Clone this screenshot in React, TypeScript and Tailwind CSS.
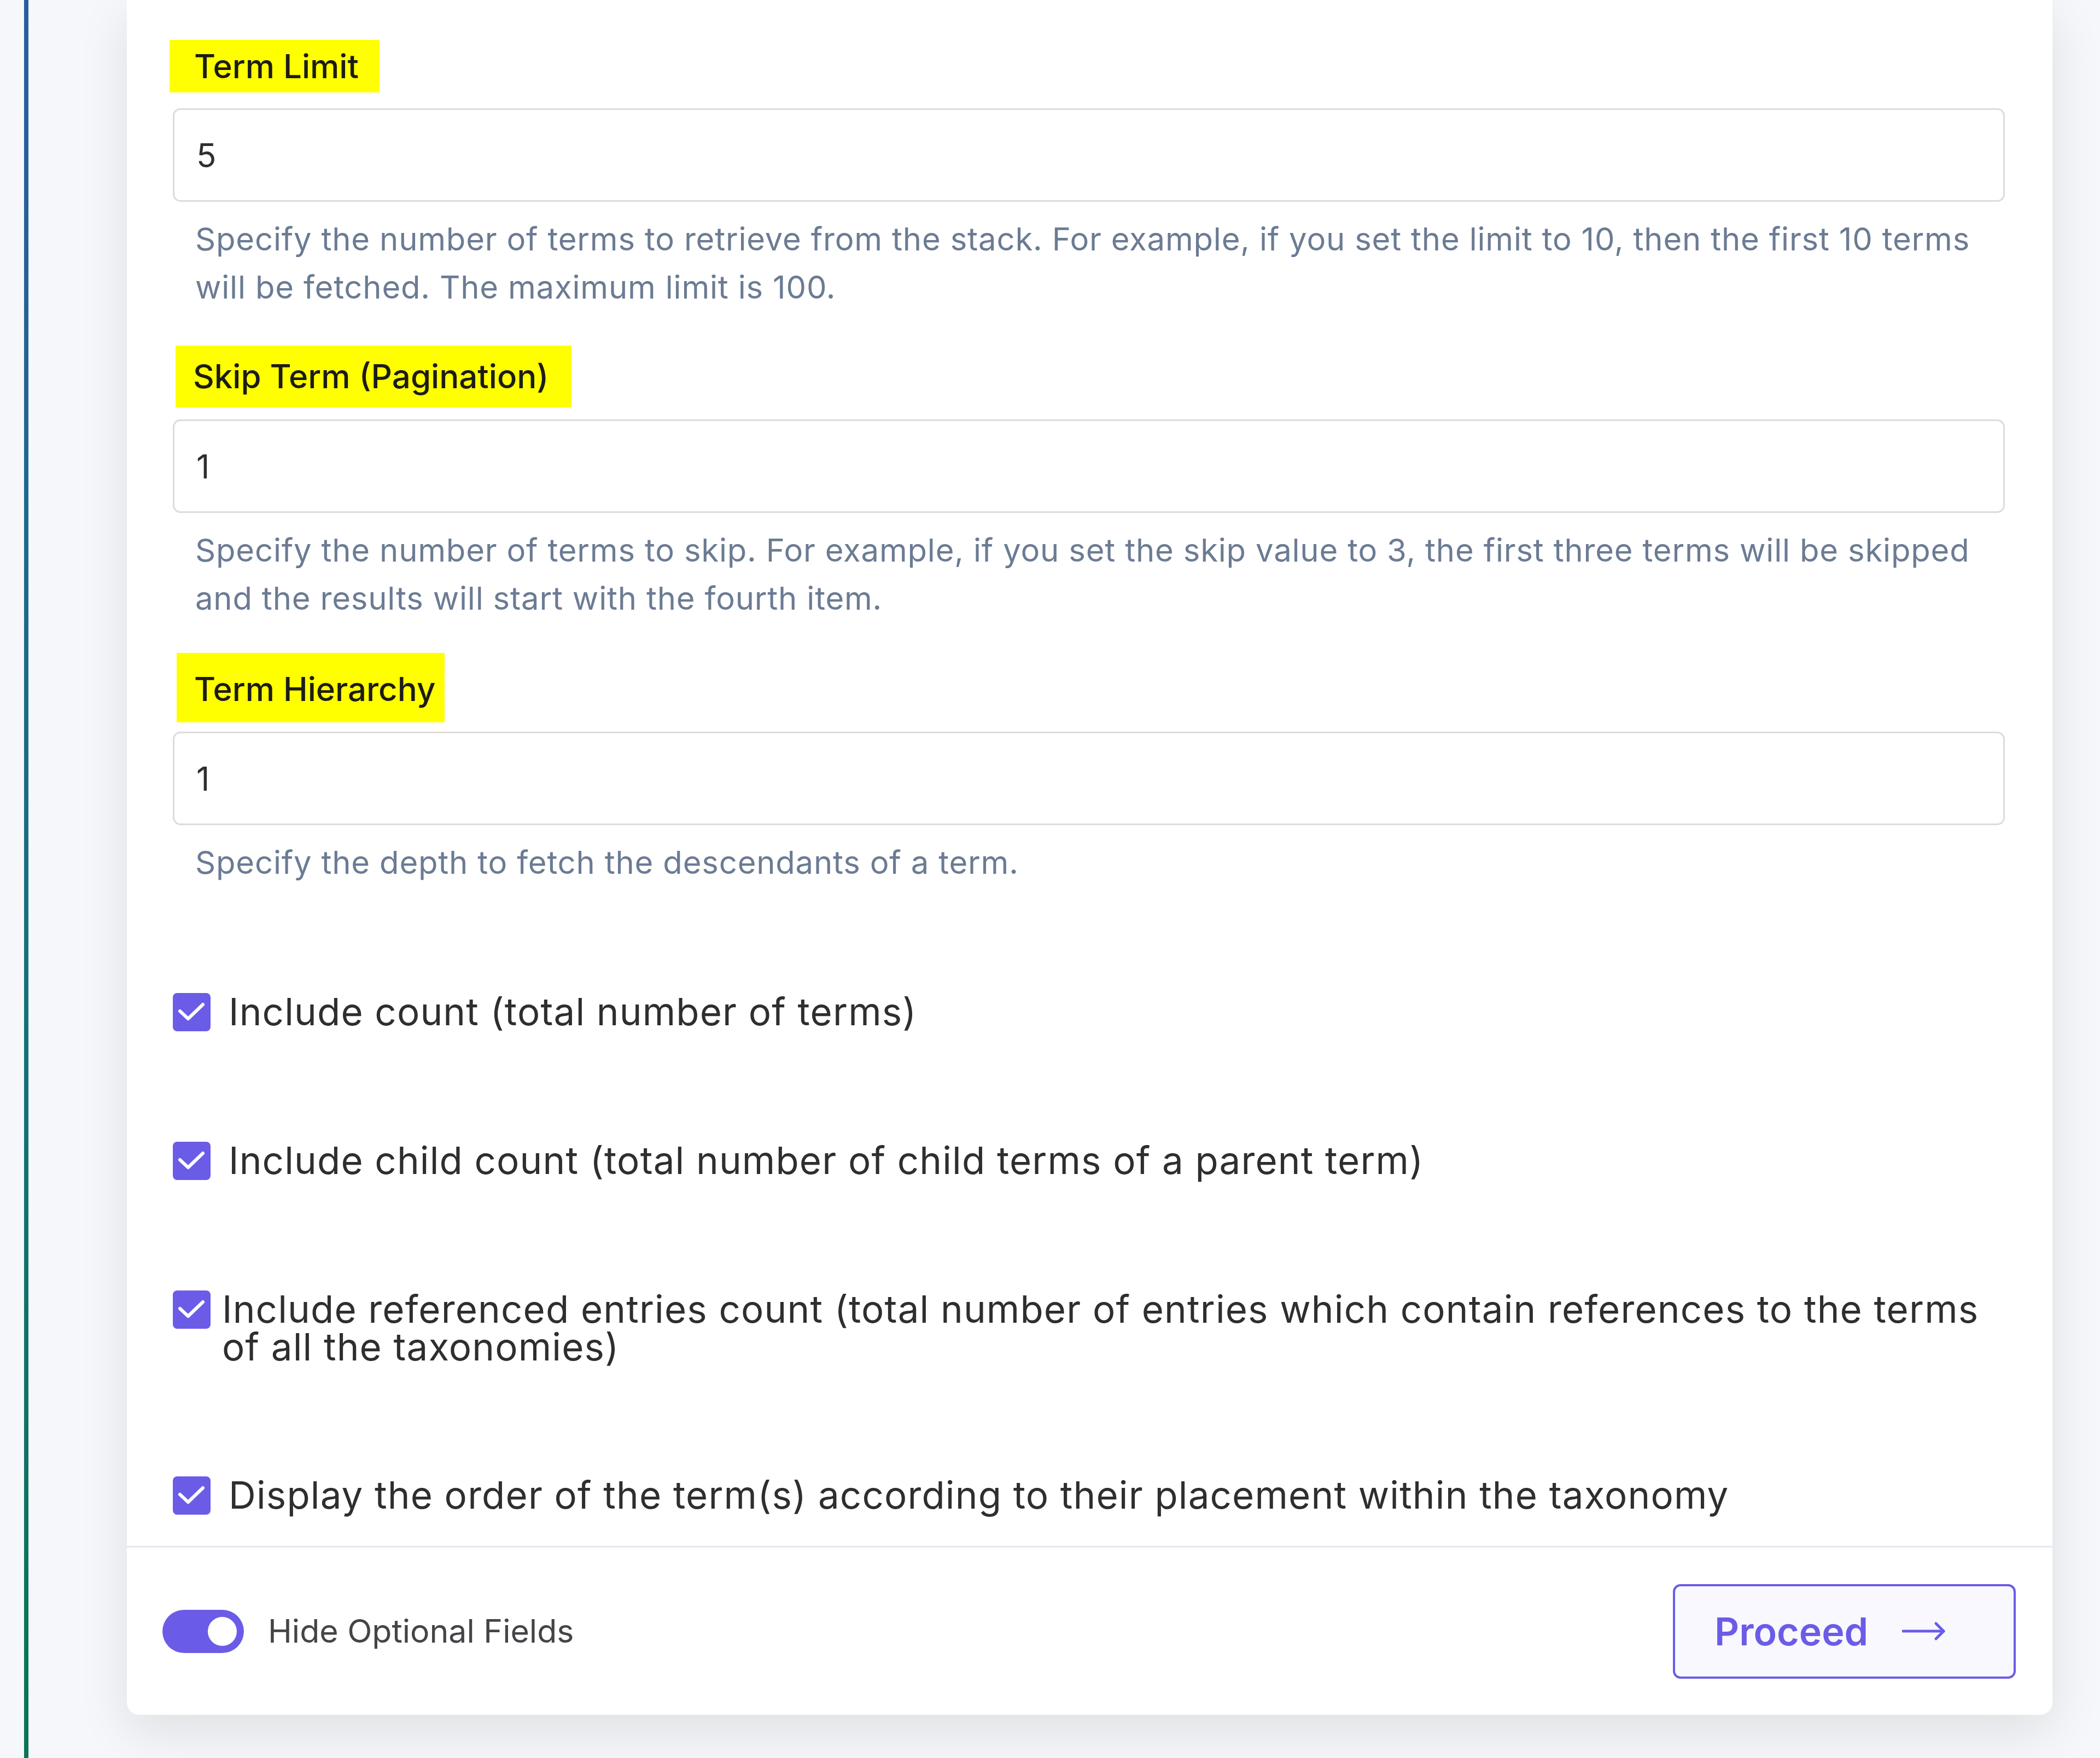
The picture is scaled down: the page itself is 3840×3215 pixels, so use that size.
import React from "react";

type FieldProps = {
  label: string;
  value: string;
  help: React.ReactNode;
  boxClass: string;
};

function Field({ label, value, help, boxClass }: FieldProps) {
  return (
    <div className="flex flex-col">
      <span className={`self-start bg-[#ffff00] text-[60px] font-medium text-[#1c1c14] ${boxClass}`}>{label}</span>
      <div className="flex h-[171px] items-center rounded-[14px] border-[3px] border-[#dcdcdc] pl-[40px] text-[60px] text-[#2f2f2f]">
        {value}
      </div>
      <p className="mt-[24px] pl-[41px] text-[58px] leading-[88px] tracking-[0.8px] text-[#6b7b93]">{help}</p>
    </div>
  );
}

function Check() {
  return (
    <div className="flex h-[70px] w-[69px] shrink-0 items-center justify-center rounded-[8px] bg-[#6b5ce7]">
      <svg width="69" height="70" viewBox="0 0 69 70" fill="none">
        <polyline points="13,33 28,47 55,21" stroke="white" strokeWidth="6" strokeLinecap="round" strokeLinejoin="round" />
      </svg>
    </div>
  );
}

function Row({ children, gap }: { children: React.ReactNode; gap: string }) {
  return (
    <div className={`flex items-start ${gap}`}>
      <Check />
      <div className="text-[69px] leading-[69px] tracking-[1.15px] whitespace-nowrap text-[#2e2e2e]">{children}</div>
    </div>
  );
}

export default function App() {
  return (
    <div className="flex h-[3215px] w-[3840px] overflow-hidden bg-[#f5f7fa] font-['Inter',sans-serif]">
      <div className="w-[232px] shrink-0 pl-[44px]">
        <div className="h-full w-[8px] bg-linear-to-b from-[#2a5ca2] via-[#186f80] to-[#0a7552]" />
      </div>

      <div className="flex w-[3521px] shrink-0 flex-col self-start rounded-b-[22px] bg-white shadow-[0_30px_90px_rgba(20,24,40,0.10)]">
        <div className="flex flex-col pl-[84px] pr-[87px] pt-[73px] pb-[57px]">
          <Field
            label="Term Limit"
            value="5"
            boxClass="-ml-[6px] mb-[29px] h-[96px] pl-[45px] pr-[38px] leading-[96px]"
            help={
              <>
                Specify the number of terms to retrieve from the stack. For example, if you set the limit to 10, then the first 10 terms
                <br />
                will be fetched. The maximum limit is 100.
              </>
            }
          />
          <div className="mt-[63px]">
            <Field
              label="Skip Term (Pagination)"
              value="1"
              boxClass="ml-[5px] mb-[22px] h-[113px] pl-[32px] pr-[42px] leading-[113px]"
              help={
                <>
                  Specify the number of terms to skip. For example, if you set the skip value to 3, the first three terms will be skipped
                  <br />
                  and the results will start with the fourth item.
                </>
              }
            />
          </div>
          <div className="mt-[56px]">
            <Field
              label="Term Hierarchy"
              value="1"
              boxClass="ml-[7px] mb-[17px] h-[127px] pl-[32px] pr-[17px] pt-[6px] leading-[121px]"
              help="Specify the depth to fetch the descendants of a term."
            />
          </div>

          <div className="mt-[195px] flex flex-col gap-[202px]">
            <Row gap="gap-[33px]">Include count (total number of terms)</Row>
            <Row gap="gap-[33px]">Include child count (total number of child terms of a parent term)</Row>
            <Row gap="gap-[21px]">
              Include referenced entries count (total number of entries which contain references to the terms
              <br />
              of all the taxonomies)
            </Row>
            <Row gap="gap-[33px]">Display the order of the term(s) according to their placement within the taxonomy</Row>
          </div>
        </div>

        <div className="flex h-[309px] items-center justify-between border-t-[3px] border-[#e3e8ef] pl-[65px] pr-[67px]">
          <div className="flex items-center gap-[44px]">
            <div className="flex h-[79px] w-[149px] items-center justify-end rounded-full bg-[#6b5ce7] pr-[13px]">
              <div className="h-[53px] w-[53px] rounded-full bg-white" />
            </div>
            <span className="text-[59px] text-[#444448]">Hide Optional Fields</span>
          </div>
          <button className="flex h-[173px] w-[627px] items-center rounded-[14px] border-[4px] border-[#6b5ce7] bg-[#f8f8fe] pl-[72px] text-[70px] font-semibold text-[#6b5ce7]">
            Proceed
            <svg className="ml-[62px]" width="80" height="40" viewBox="0 0 80 40" fill="none">
              <line x1="2" y1="20" x2="76" y2="20" stroke="#6b5ce7" strokeWidth="5" strokeLinecap="round" />
              <polyline points="62,6 76,20 62,34" stroke="#6b5ce7" strokeWidth="5" strokeLinecap="round" strokeLinejoin="round" />
            </svg>
          </button>
        </div>
      </div>
    </div>
  );
}
